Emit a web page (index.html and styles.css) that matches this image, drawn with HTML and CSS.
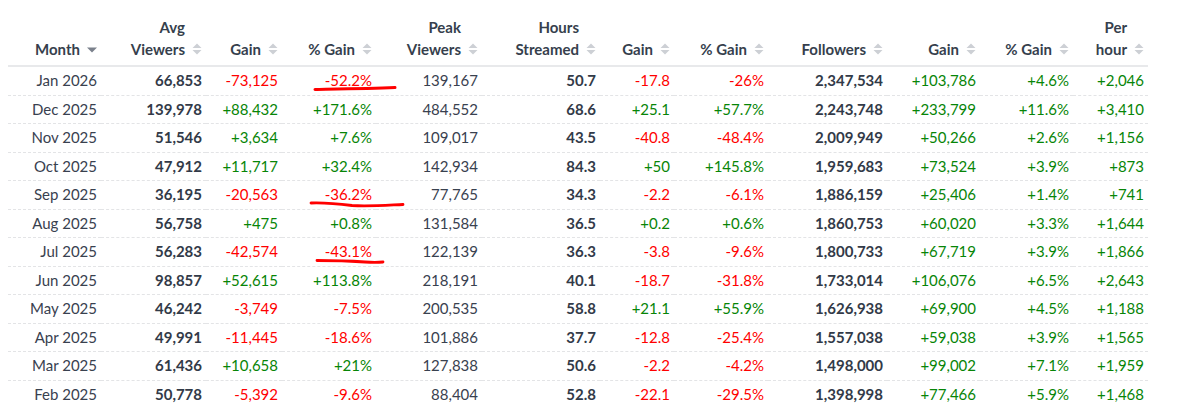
FILE: index.html
```html
<!DOCTYPE html>
<html>
<head>
<meta charset="utf-8">
<link rel="stylesheet" href="styles.css">
</head>
<body>
<table class="stats">
  <colgroup>
    <col class="c1"><col class="c2"><col class="c3"><col class="c4"><col class="c5"><col class="c6">
    <col class="c7"><col class="c8"><col class="c9"><col class="c10"><col class="c11"><col class="c12">
  </colgroup>
  <thead>
    <tr>
      <th><div class="hd"><span class="ht">Month</span><svg class="ico" width="10" height="14" viewBox="0 0 10 14"><path d="M0 5.5h10L5 10.5z" fill="#7b818c"/></svg></div></th>
      <th><div class="hd"><span class="ht">Avg<br>Viewers</span><svg class="ico" width="10" height="14" viewBox="0 0 10 14"><path d="M0.5 6L5 1.5L9.5 6z M0.5 8L5 12.5L9.5 8z" fill="#cdd0d5"/></svg></div></th>
      <th><div class="hd"><span class="ht">Gain</span><svg class="ico" width="10" height="14" viewBox="0 0 10 14"><path d="M0.5 6L5 1.5L9.5 6z M0.5 8L5 12.5L9.5 8z" fill="#cdd0d5"/></svg></div></th>
      <th><div class="hd"><span class="ht">% Gain</span><svg class="ico" width="10" height="14" viewBox="0 0 10 14"><path d="M0.5 6L5 1.5L9.5 6z M0.5 8L5 12.5L9.5 8z" fill="#cdd0d5"/></svg></div></th>
      <th><div class="hd"><span class="ht">Peak<br>Viewers</span><svg class="ico" width="10" height="14" viewBox="0 0 10 14"><path d="M0.5 6L5 1.5L9.5 6z M0.5 8L5 12.5L9.5 8z" fill="#cdd0d5"/></svg></div></th>
      <th><div class="hd"><span class="ht">Hours<br>Streamed</span><svg class="ico" width="10" height="14" viewBox="0 0 10 14"><path d="M0.5 6L5 1.5L9.5 6z M0.5 8L5 12.5L9.5 8z" fill="#cdd0d5"/></svg></div></th>
      <th><div class="hd"><span class="ht">Gain</span><svg class="ico" width="10" height="14" viewBox="0 0 10 14"><path d="M0.5 6L5 1.5L9.5 6z M0.5 8L5 12.5L9.5 8z" fill="#cdd0d5"/></svg></div></th>
      <th><div class="hd"><span class="ht">% Gain</span><svg class="ico" width="10" height="14" viewBox="0 0 10 14"><path d="M0.5 6L5 1.5L9.5 6z M0.5 8L5 12.5L9.5 8z" fill="#cdd0d5"/></svg></div></th>
      <th><div class="hd"><span class="ht">Followers</span><svg class="ico" width="10" height="14" viewBox="0 0 10 14"><path d="M0.5 6L5 1.5L9.5 6z M0.5 8L5 12.5L9.5 8z" fill="#cdd0d5"/></svg></div></th>
      <th><div class="hd"><span class="ht">Gain</span><svg class="ico" width="10" height="14" viewBox="0 0 10 14"><path d="M0.5 6L5 1.5L9.5 6z M0.5 8L5 12.5L9.5 8z" fill="#cdd0d5"/></svg></div></th>
      <th><div class="hd"><span class="ht">% Gain</span><svg class="ico" width="10" height="14" viewBox="0 0 10 14"><path d="M0.5 6L5 1.5L9.5 6z M0.5 8L5 12.5L9.5 8z" fill="#cdd0d5"/></svg></div></th>
      <th><div class="hd"><span class="ht">Per<br>hour</span><svg class="ico" width="10" height="14" viewBox="0 0 10 14"><path d="M0.5 6L5 1.5L9.5 6z M0.5 8L5 12.5L9.5 8z" fill="#cdd0d5"/></svg></div></th>
    </tr>
  </thead>
  <tbody>
    <tr><td>Jan 2026</td><td class="b">66,853</td><td class="neg">-73,125</td><td class="neg">-52.2%</td><td>139,167</td><td class="b">50.7</td><td class="neg">-17.8</td><td class="neg">-26%</td><td class="b">2,347,534</td><td class="pos">+103,786</td><td class="pos">+4.6%</td><td class="pos">+2,046</td></tr>
    <tr><td>Dec 2025</td><td class="b">139,978</td><td class="pos">+88,432</td><td class="pos">+171.6%</td><td>484,552</td><td class="b">68.6</td><td class="pos">+25.1</td><td class="pos">+57.7%</td><td class="b">2,243,748</td><td class="pos">+233,799</td><td class="pos">+11.6%</td><td class="pos">+3,410</td></tr>
    <tr><td>Nov 2025</td><td class="b">51,546</td><td class="pos">+3,634</td><td class="pos">+7.6%</td><td>109,017</td><td class="b">43.5</td><td class="neg">-40.8</td><td class="neg">-48.4%</td><td class="b">2,009,949</td><td class="pos">+50,266</td><td class="pos">+2.6%</td><td class="pos">+1,156</td></tr>
    <tr><td>Oct 2025</td><td class="b">47,912</td><td class="pos">+11,717</td><td class="pos">+32.4%</td><td>142,934</td><td class="b">84.3</td><td class="pos">+50</td><td class="pos">+145.8%</td><td class="b">1,959,683</td><td class="pos">+73,524</td><td class="pos">+3.9%</td><td class="pos">+873</td></tr>
    <tr><td>Sep 2025</td><td class="b">36,195</td><td class="neg">-20,563</td><td class="neg">-36.2%</td><td>77,765</td><td class="b">34.3</td><td class="neg">-2.2</td><td class="neg">-6.1%</td><td class="b">1,886,159</td><td class="pos">+25,406</td><td class="pos">+1.4%</td><td class="pos">+741</td></tr>
    <tr><td>Aug 2025</td><td class="b">56,758</td><td class="pos">+475</td><td class="pos">+0.8%</td><td>131,584</td><td class="b">36.5</td><td class="pos">+0.2</td><td class="pos">+0.6%</td><td class="b">1,860,753</td><td class="pos">+60,020</td><td class="pos">+3.3%</td><td class="pos">+1,644</td></tr>
    <tr><td>Jul 2025</td><td class="b">56,283</td><td class="neg">-42,574</td><td class="neg">-43.1%</td><td>122,139</td><td class="b">36.3</td><td class="neg">-3.8</td><td class="neg">-9.6%</td><td class="b">1,800,733</td><td class="pos">+67,719</td><td class="pos">+3.9%</td><td class="pos">+1,866</td></tr>
    <tr><td>Jun 2025</td><td class="b">98,857</td><td class="pos">+52,615</td><td class="pos">+113.8%</td><td>218,191</td><td class="b">40.1</td><td class="neg">-18.7</td><td class="neg">-31.8%</td><td class="b">1,733,014</td><td class="pos">+106,076</td><td class="pos">+6.5%</td><td class="pos">+2,643</td></tr>
    <tr><td>May 2025</td><td class="b">46,242</td><td class="neg">-3,749</td><td class="neg">-7.5%</td><td>200,535</td><td class="b">58.8</td><td class="pos">+21.1</td><td class="pos">+55.9%</td><td class="b">1,626,938</td><td class="pos">+69,900</td><td class="pos">+4.5%</td><td class="pos">+1,188</td></tr>
    <tr><td>Apr 2025</td><td class="b">49,991</td><td class="neg">-11,445</td><td class="neg">-18.6%</td><td>101,886</td><td class="b">37.7</td><td class="neg">-12.8</td><td class="neg">-25.4%</td><td class="b">1,557,038</td><td class="pos">+59,038</td><td class="pos">+3.9%</td><td class="pos">+1,565</td></tr>
    <tr><td>Mar 2025</td><td class="b">61,436</td><td class="pos">+10,658</td><td class="pos">+21%</td><td>127,838</td><td class="b">50.6</td><td class="neg">-2.2</td><td class="neg">-4.2%</td><td class="b">1,498,000</td><td class="pos">+99,002</td><td class="pos">+7.1%</td><td class="pos">+1,959</td></tr>
    <tr><td>Feb 2025</td><td class="b">50,778</td><td class="neg">-5,392</td><td class="neg">-9.6%</td><td>88,404</td><td class="b">52.8</td><td class="neg">-22.1</td><td class="neg">-29.5%</td><td class="b">1,398,998</td><td class="pos">+77,466</td><td class="pos">+5.9%</td><td class="pos">+1,468</td></tr>
  </tbody>
</table>
<svg class="marks" width="1199" height="415" viewBox="0 0 1199 415">
  <path d="M315 89.5 C340 89 370 88.5 395 87.5" stroke="#f00" stroke-width="3" fill="none" stroke-linecap="round"/>
  <path d="M311 203 C325 202.5 340 204 352 205.5 C370 206.5 390 205 403 204.5" stroke="#f00" stroke-width="2.8" fill="none" stroke-linecap="round"/>
  <path d="M317 260.5 C335 260.5 350 261 365 262 C372 262.5 378 262.5 383 262" stroke="#f00" stroke-width="2.8" fill="none" stroke-linecap="round"/>
</svg>
</body>
</html>
```

FILE: styles.css
```css
html, body {
  margin: 0;
  padding: 0;
  background: #fff;
}
body {
  padding: 8px;
  font-family: Lato, "Open Sans", sans-serif;
  font-size: 15px;
  color: #39414f;
}
.stats {
  table-layout: fixed;
  width: 1140px;
  border-collapse: collapse;
}
.c1 { width: 93px; }
.c2 { width: 105px; }
.c3 { width: 76px; }
.c4 { width: 94px; }
.c5 { width: 106px; }
.c6 { width: 118px; }
.c7 { width: 74px; }
.c8 { width: 94px; }
.c9 { width: 119px; }
.c10 { width: 93px; }
.c11 { width: 93px; }
.c12 { width: 75px; }

.stats th {
  padding: 8px 4px 5px;
  vertical-align: bottom;
  font-weight: 700;
  color: #363f4d;
  line-height: 22px;
  border-bottom: 2px solid #e8e9eb;
}
.hd {
  display: flex;
  justify-content: flex-end;
  align-items: flex-end;
}
.ht {
  text-align: right;
}
.ico {
  flex: none;
  margin-left: 7px;
  margin-bottom: 4px;
}
.stats td {
  padding: 0 4px;
  line-height: 27.55px;
  text-align: right;
  white-space: nowrap;
  border-bottom: 1px dashed #e3e4e6;
}
.stats tbody tr:last-child td {
  border-bottom: none;
}
.b {
  font-weight: 700;
  color: #323a48;
}
.neg { color: #f00; }
.pos { color: #078507; }
.marks {
  position: absolute;
  left: 0;
  top: 0;
  pointer-events: none;
}
```
